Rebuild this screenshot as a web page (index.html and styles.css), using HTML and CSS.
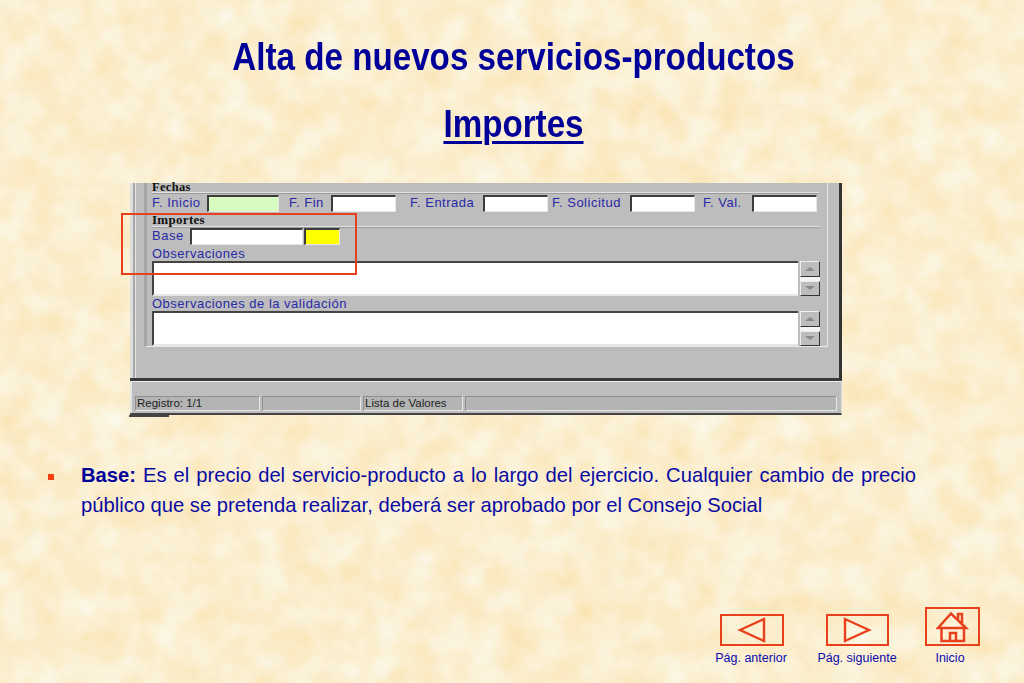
FILE: index.html
```html
<!DOCTYPE html>
<html lang="es">
<head>
<meta charset="utf-8">
<title>Importes</title>
<link rel="stylesheet" href="styles.css">
</head>
<body>
<main class="slide">
  <header class="head">
    <h1 class="title">Alta de nuevos servicios-productos</h1>
    <h2 class="subtitle">Importes</h2>
  </header>

  <section class="shot">
    <div class="window">
      <div class="frame">
        <div class="group">Fechas</div>
        <div class="row dates">
          <label class="lb w-inicio">F. Inicio</label><span class="inp green w-72"></span>
          <label class="lb w-fin">F. Fin</label><span class="inp w-fin-inp"></span>
          <label class="lb w-entrada">F. Entrada</label><span class="inp w-65"></span>
          <label class="lb w-sol">F. Solicitud</label><span class="inp w-65"></span>
          <label class="lb w-val">F. Val.</label><span class="inp w-65"></span>
        </div>
        <div class="group second">Importes</div>
        <div class="row base">
          <label class="lb w-base">Base</label><span class="inp w-113"></span><span class="inp yellow"></span>
        </div>
        <div class="lb obs">Observaciones</div>
        <div class="area-row">
          <div class="area"></div>
          <div class="scroll"><span class="btn"><i class="up"></i></span><span class="track"></span><span class="btn"><i class="down"></i></span></div>
        </div>
        <div class="lb obs">Observaciones de la validación</div>
        <div class="area-row">
          <div class="area"></div>
          <div class="scroll"><span class="btn"><i class="up"></i></span><span class="track"></span><span class="btn"><i class="down"></i></span></div>
        </div>
      </div>
    </div>
    <div class="status">
      <span class="cell c1">Registro: 1/1</span>
      <span class="cell c2"></span>
      <span class="cell c3">Lista de Valores</span>
      <span class="cell c4"></span>
    </div>
    <div class="tab-edge"></div>
    <div class="highlight"></div>
  </section>

  <ul class="notes">
    <li><b>Base:</b> Es el precio del servicio-producto a lo largo del ejercicio. Cualquier cambio de precio público que se pretenda realizar, deberá ser aprobado por el Consejo Social</li>
  </ul>

  <nav class="nav">
    <a class="nav-item prev">
      <span class="nav-box wide">
        <svg width="30" height="26" viewBox="0 0 30 26"><path d="M3 13 L27 2 V24 Z" fill="none" stroke="#e8401c" stroke-width="2.4"/></svg>
      </span>
      <span class="nav-text">Pág. anterior</span>
    </a>
    <a class="nav-item next">
      <span class="nav-box wide narrow">
        <svg width="30" height="26" viewBox="0 0 30 26"><path d="M27 13 L3 2 V24 Z" fill="none" stroke="#e8401c" stroke-width="2.4"/></svg>
      </span>
      <span class="nav-text">Pág. siguiente</span>
    </a>
    <a class="nav-item home">
      <span class="nav-box tall">
        <svg width="34" height="32" viewBox="0 0 34 32"><path d="M2 17 L15 2.500 L30 17 Z M5.500 17 V30 H28 V17 M14 30 V22 H20 V30 M22 9 V3 H26 V13" fill="none" stroke="#e8401c" stroke-width="2.5"/></svg>
      </span>
      <span class="nav-text home-text">Inicio</span>
    </a>
  </nav>
</main>
</body>
</html>
```

FILE: styles.css
```css
* { box-sizing: border-box; }
html, body { margin: 0; padding: 0; }
body {
  width: 1024px;
  height: 683px;
  overflow: hidden;
  font-family: "Liberation Sans", Arial, sans-serif;
  background-color: #fbedc6;
  background-image: url("data:image/svg+xml,%3Csvg xmlns='http://www.w3.org/2000/svg' width='1024' height='683'%3E%3Cfilter id='n' x='0' y='0' width='100%25' height='100%25' color-interpolation-filters='sRGB'%3E%3CfeTurbulence type='fractalNoise' baseFrequency='0.032' numOctaves='3' seed='7'/%3E%3CfeColorMatrix values='0 0 0 0 0.985 0.10 0 0 0 0.885 0.26 0 0 0 0.68 0 0 0 0 1'/%3E%3C/filter%3E%3Crect width='1024' height='683' filter='url(%23n)'/%3E%3C/svg%3E");
}
.slide { height: 683px; display: flex; flex-direction: column; position: relative; }

.head { text-align: center; color: #000099; padding: 34px 0 0 3px; }
.title, .subtitle {
  margin: 0;
  font-weight: 700;
  font-size: 38px;
  line-height: 46px;
  transform: scaleX(.873);
}
.subtitle { margin-top: 21px; text-decoration: underline; text-decoration-thickness: 3px; text-underline-offset: 4px; }

.shot { margin: 36px 0 0 130px; width: 712px; position: relative; }
.window {
  height: 198px;
  background: #bdbdbd;
  padding: 0 0 0 14px;
  border-right: 3px solid #333;
  border-bottom: 3px solid #3a3a3a;
  box-shadow: inset 3px 0 0 #ddd, inset 5px 0 0 #a8a8a8, inset 6px 0 0 #e2e2e2;
}
.frame {
  width: 684px;
  height: 164px;
  padding-left: 5px;
  border-left: 3px solid #a5a5a5;
  border-right: 1px solid #e8e8e8;
  border-bottom: 1px solid #e8e8e8;
}
.group {
  font-family: "Liberation Serif", serif;
  font-weight: 700;
  font-size: 12.5px;
  line-height: 8px;
  letter-spacing: .3px;
  color: #111;
  height: 10px;
  border-bottom: 1px solid #e2e2e2;
  box-shadow: 0 1px 0 #9a9a9a;
  margin-right: 8px;
}
.group.second { margin-top: 2px; height: 12px; line-height: 10px; font-size: 13px; }
.row { display: flex; align-items: flex-start; height: 18px; }
.dates { margin-top: 2px; }
.base { margin-top: 1px; }
.lb { font-size: 13px; line-height: 16px; letter-spacing: .5px; color: #2a2aa8; white-space: nowrap; }
.w-inicio { width: 55px; }
.w-fin { width: 42px; margin-left: 10px; }
.w-entrada { width: 73px; margin-left: 14px; }
.w-sol { width: 78px; margin-left: 4px; }
.w-val { width: 49px; margin-left: 8px; }
.w-base { width: 38px; }
.inp {
  display: block;
  height: 17px;
  background: #fff;
  border-top: 2px solid #3c3c3c;
  border-left: 2px solid #3c3c3c;
  border-right: 1px solid #e6e6e6;
  border-bottom: 1px solid #e6e6e6;
}
.w-72 { width: 72px; }
.w-fin-inp, .w-65 { width: 65px; }
.w-113 { width: 113px; }
.green { background: #d8fcc0; }
.yellow { width: 36px; margin-left: 1px; background: #ffff00; }
.obs { height: 15px; line-height: 15px; }
.area-row { display: flex; height: 35px; gap: 2px; }
.area {
  width: 646px;
  background: #fff;
  border-top: 2px solid #444;
  border-left: 2px solid #444;
  border-bottom: 2px solid #e6e6e6;
}
.scroll { width: 20px; display: flex; flex-direction: column; }
.btn {
  flex: 1;
  background: #bdbdbd;
  border-top: 1px solid #eee;
  border-left: 1px solid #eee;
  border-right: 1px solid #333;
  border-bottom: 1px solid #333;
  display: flex;
  align-items: center;
  justify-content: center;
}
.track { height: 4px; background: #f4f4f4; }
.up, .down { width: 0; height: 0; border-left: 5px solid transparent; border-right: 5px solid transparent; }
.up { border-bottom: 4px solid #8a8a8a; }
.down { border-top: 4px solid #8a8a8a; }

.status {
  height: 34px;
  padding: 14px 4px 4px 5px;
  display: flex;
  background: #bdbdbd;
  border-top: 1px solid #ececec;
  border-bottom: 2px solid #444;
  border-right: 1px solid #ddd;
  gap: 2px;
  box-shadow: inset 2px 0 0 #e4e4e4;
}
.cell {
  height: 15px;
  font-size: 11.5px;
  line-height: 13px;
  color: #222;
  padding-left: 1px;
  background: #b4b4b4;
  border-top: 1px solid #8e8e8e;
  border-left: 1px solid #8e8e8e;
  border-right: 1px solid #e6e6e6;
  border-bottom: 1px solid #e6e6e6;
  white-space: nowrap;
}
.c1 { width: 125px; }
.c2 { width: 99px; }
.c3 { width: 100px; }
.c4 { flex: 1; }
.tab-edge { width: 40px; height: 2px; margin-left: -1px; background: #444; }
.highlight { position: absolute; left: -9px; top: 30px; width: 236px; height: 62px; border: 2px solid #e8401c; }

.notes { margin: 43px 0 0; padding: 0 108px 0 81px; list-style: none; color: #0a0aa5; font-size: 20.2px; line-height: 30px; text-align: justify; }
.notes li { position: relative; }
.notes li::before { content: ""; position: absolute; left: -33px; top: 14px; width: 6px; height: 6px; background: #f0400f; }
.notes b { color: #00009a; }

.nav { margin-top: auto; padding: 0 44px 18px 0; display: flex; justify-content: flex-end; align-items: flex-end; }
.nav-item { display: flex; flex-direction: column; align-items: center; }
.prev { width: 72px; }
.next { width: 80px; margin-left: 29px; }
.home { width: 55px; margin-left: 28px; }
.nav-box { display: flex; align-items: center; justify-content: center; border: 2px solid #e8401c; }
.wide { width: 64px; height: 32px; }
.narrow { width: 63px; }
.tall { width: 55px; height: 39px; }
.nav-text { margin-top: 5px; font-size: 12.5px; line-height: 14px; color: #0a0ab0; white-space: nowrap; }
.prev .nav-text { margin-right: 2px; }
.home-text { margin-right: 5px; }
```
